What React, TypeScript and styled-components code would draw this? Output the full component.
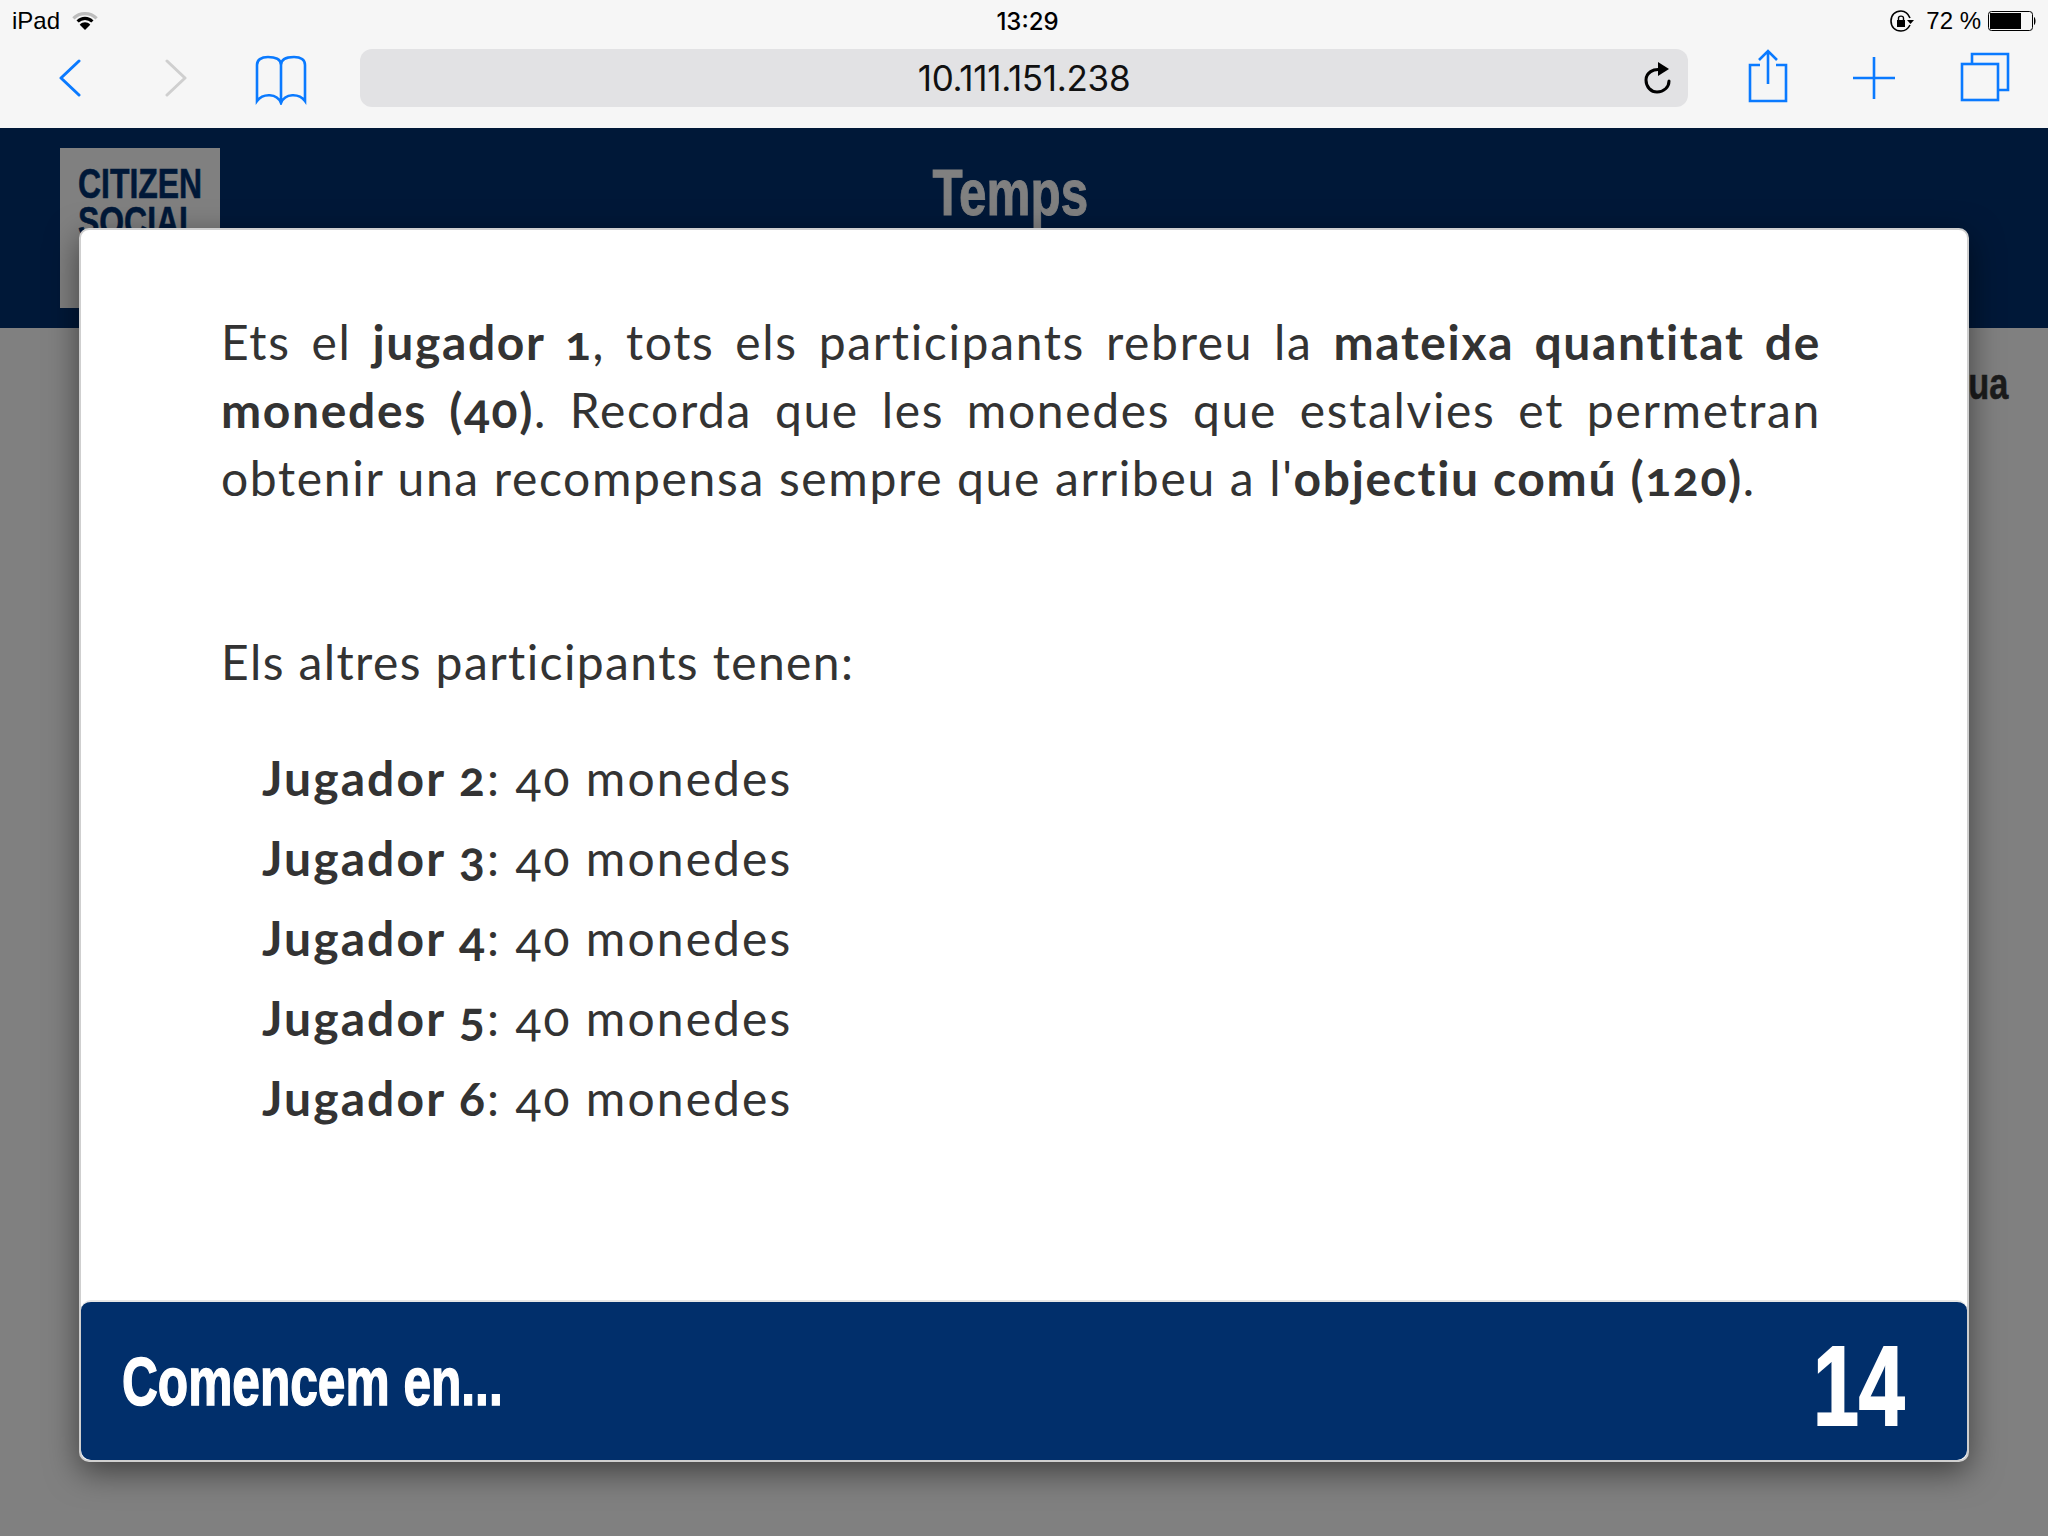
import React from 'react';
import styled, { createGlobalStyle } from 'styled-components';

const GlobalStyle = createGlobalStyle`
  html, body {
    margin: 0;
    padding: 0;
    background: #808080;
  }
`;

const Screen = styled.div`
  position: relative;
  width: 2048px;
  height: 1536px;
  overflow: hidden;
  display: flex;
  flex-direction: column;
  background: #808080;
  font-family: "Liberation Sans", Arial, sans-serif;
`;

const Chrome = styled.div`
  height: 128px;
  background: #f6f6f6;
  display: flex;
  flex-direction: column;
`;

const StatusBar = styled.div`
  height: 42px;
  display: grid;
  grid-template-columns: 1fr auto 1fr;
  align-items: center;
  padding: 0 11px 0 12px;
  font-size: 24px;
  color: #000;
`;

const StatusLeft = styled.div`
  display: flex;
  align-items: center;
  gap: 12px;
`;

const StatusTime = styled.div`
  font-family: Inter, "Liberation Sans", sans-serif;
  font-weight: 500;
  font-size: 24px;
  margin-left: 6px;
`;

const StatusRight = styled.div`
  display: flex;
  align-items: center;
  justify-content: flex-end;
  gap: 12px;
`;

const Percent = styled.span`
  margin-right: -5px;
`;

const Toolbar = styled.div`
  flex: 1;
  display: flex;
  align-items: flex-start;
  padding-top: 7px;
`;

const NavGroup = styled.div`
  width: 360px;
  height: 58px;
  display: flex;
  align-items: center;
`;

const NavButton = styled.div<{ $w: number; $ml: number; $mt?: number }>`
  width: ${p => p.$w}px;
  margin-left: ${p => p.$ml}px;
  margin-top: ${p => p.$mt ?? 0}px;
  display: flex;
`;

const UrlBar = styled.div`
  position: relative;
  width: 1328px;
  height: 58px;
  border-radius: 12px;
  background: #e2e2e4;
  display: flex;
  align-items: center;
  justify-content: center;
  font-family: Inter, "Liberation Sans", sans-serif;
  font-size: 35px;
  letter-spacing: -0.3px;
  color: #111;
`;

const ReloadSlot = styled.div`
  position: absolute;
  right: 15px;
  top: 13px;
  display: flex;
`;

const ActionGroup = styled.div`
  flex: 1;
  display: flex;
  height: 58px;
  padding-left: 60px;
  gap: 65px;
`;

const ActionSlot = styled.div<{ $top: number }>`
  display: flex;
  margin-top: ${p => p.$top}px;
  height: fit-content;
`;

const Page = styled.div`
  flex: 1;
  display: flex;
  flex-direction: column;
`;

const Header = styled.header`
  height: 200px;
  background: #001838;
  display: flex;
  justify-content: center;
  position: relative;
`;

const Logo = styled.div`
  position: absolute;
  left: 60px;
  top: 20px;
  width: 160px;
  height: 160px;
  background: #808080;
  box-sizing: border-box;
  padding: 17px 0 0 18px;
  display: flex;
  flex-direction: column;
  font-weight: 700;
  font-size: 42px;
  color: #001838;
  overflow: hidden;
`;

const LogoLine = styled.div`
  height: 38px;
  line-height: 38px;
`;

const Squeezed = styled.span<{ $x: number; $origin?: string; $stroke?: number }>`
  display: inline-block;
  white-space: nowrap;
  transform: scaleX(${p => p.$x});
  transform-origin: ${p => p.$origin ?? 'left'} center;
  -webkit-text-stroke: ${p => p.$stroke ?? 0}px currentColor;
`;

const HeaderTitle = styled.h1`
  margin: 30px 28px 0 0;
  font-weight: 700;
  font-size: 65px;
  line-height: 70px;
  color: #808080;
`;

const PageHint = styled.div`
  align-self: flex-end;
  margin: 31px 40px 0 0;
  font-weight: 700;
  font-size: 44px;
  color: #1c1c1c;
`;

const Overlay = styled.div`
  position: absolute;
  inset: 0;
  padding: 228px 79px 74px 79px;
  display: flex;
`;

const Modal = styled.div`
  flex: 1;
  display: flex;
  flex-direction: column;
  background: #fff;
  border: 2px solid #cfcfcf;
  border-radius: 10px;
  box-shadow: 0 10px 32px rgba(0, 0, 0, 0.5);
  overflow: hidden;
`;

const ModalBody = styled.div`
  flex: 1;
  padding: 78px 146px 0 140px;
  font-family: Lato, "Open Sans", sans-serif;
  font-size: 48px;
  letter-spacing: 1.65px;
  line-height: 68px;
  color: #333;
  font-variant-numeric: oldstyle-nums;
  font-variant-ligatures: none;
`;

const Line = styled.div<{ $justify?: boolean }>`
  text-align-last: ${p => (p.$justify ? 'justify' : 'left')};
`;

const Intro = styled.div`
  margin-top: 116px;
  letter-spacing: 1.4px;
`;

const PlayerList = styled.ul`
  list-style: none;
  margin: 42px 0 0;
  padding: 0 0 0 41px;
  letter-spacing: 2.1px;
`;

const PlayerRow = styled.li`
  height: 80px;
  line-height: 80px;
`;

const Footer = styled.div`
  height: 160px;
  flex-shrink: 0;
  box-sizing: border-box;
  background: #012f6b;
  border-top: 2px solid #e6e6e6;
  border-radius: 10px;
  display: flex;
  align-items: center;
  justify-content: space-between;
  padding: 0 62px 0 41px;
  color: #fff;
  font-weight: 700;
`;

const FooterLabel = styled.div`
  font-size: 68px;
`;

const Countdown = styled.div`
  font-size: 113px;
  margin-top: 10px;
`;

const BLUE = '#0a7aff';

const BackIcon = ({ color = BLUE, flip = false }: { color?: string; flip?: boolean }) => (
  <svg width="22" height="38" viewBox="0 0 22 38" fill="none" style={flip ? { transform: 'scaleX(-1)' } : undefined}>
    <path d="M20 2 L2 19 L20 36" stroke={color} strokeWidth="3" strokeLinecap="round" strokeLinejoin="round" />
  </svg>
);

const BookIcon = () => (
  <svg width="52" height="50" viewBox="0 0 52 50" fill="none" stroke={BLUE} strokeWidth="2.6">
    <path d="M26 10 C26 4 20 2 13 2 C6 2 2 5 2 10 V46 C8 38 22 38 26 48 C30 38 44 38 50 46 V10 C50 5 46 2 39 2 C32 2 26 4 26 10 V48" />
  </svg>
);

const ReloadIcon = () => (
  <svg width="30" height="32" viewBox="0 0 30 32" fill="none">
    <path d="M19 8 C10 6 3 11 3 18 C3 25 8 30 14 30 C21 30 26 25 26 19" stroke="#000" strokeWidth="3" strokeLinecap="round" />
    <path d="M15 0 L26 7 L15 14 Z" fill="#000" />
  </svg>
);

const ShareIcon = () => (
  <svg width="40" height="54" viewBox="0 0 40 54" fill="none" stroke={BLUE} strokeWidth="2.6">
    <path d="M12 16 H2 V52 H38 V16 H28" />
    <path d="M20 35 V2 M11 11 L20 2 L29 11" />
  </svg>
);

const PlusIcon = () => (
  <svg width="42" height="42" viewBox="0 0 42 42" fill="none" stroke={BLUE} strokeWidth="2.6">
    <path d="M21 0 V42 M0 21 H42" />
  </svg>
);

const TabsIcon = () => (
  <svg width="50" height="50" viewBox="0 0 50 50" fill="none" stroke={BLUE} strokeWidth="2.6">
    <path d="M12 11 V2 H48 V38 H39" />
    <rect x="2" y="12" width="36" height="36" />
  </svg>
);

const WifiIcon = () => (
  <svg width="26" height="19" viewBox="0 0 24 18">
    <path d="M1 6 C7 0 17 0 23 6" stroke="#bdbdbd" strokeWidth="3" fill="none" />
    <path d="M5 9 C9 5 15 5 19 9" stroke="#000" strokeWidth="3" fill="none" />
    <path d="M7 12 C10 9 14 9 17 12 L12 17 Z" fill="#000" />
  </svg>
);

const RotationLockIcon = () => (
  <svg width="24" height="22" viewBox="0 0 24 22" fill="none">
    <path d="M20 8 C18 3 14 1 11 1 C5 1 1 5 1 11 C1 17 5 21 11 21 C15 21 18 19 20 15" stroke="#000" strokeWidth="1.6" />
    <rect x="7" y="10" width="8" height="7" fill="#000" />
    <path d="M8.5 10 V8 C8.5 5.5 13.500 5.500 13.500 8 V10" stroke="#000" strokeWidth="1.4" />
    <path d="M17 10 H24 L20.500 14 Z" fill="#000" />
  </svg>
);

const BatteryIcon = () => (
  <svg width="49" height="20" viewBox="0 0 49 20" fill="none">
    <rect x="0.5" y="0.5" width="44" height="19" rx="3" stroke="#000" />
    <rect x="2" y="2" width="31" height="16" fill="#000" />
    <path d="M46 6 C48 7 48 13 46 14 Z" fill="#000" />
  </svg>
);

const players = [2, 3, 4, 5, 6];

export default function App() {
  return (
    <Screen>
      <GlobalStyle />
      <Chrome>
        <StatusBar>
          <StatusLeft>
            iPad
            <WifiIcon />
          </StatusLeft>
          <StatusTime>13:29</StatusTime>
          <StatusRight>
            <RotationLockIcon />
            <Percent>72 %</Percent>
            <BatteryIcon />
          </StatusRight>
        </StatusBar>
        <Toolbar>
          <NavGroup>
            <NavButton $w={22} $ml={59}>
              <BackIcon />
            </NavButton>
            <NavButton $w={22} $ml={84}>
              <BackIcon color="#cfcfcf" flip />
            </NavButton>
            <NavButton $w={52} $ml={68} $mt={3}>
              <BookIcon />
            </NavButton>
          </NavGroup>
          <UrlBar>
            10.111.151.238
            <ReloadSlot>
              <ReloadIcon />
            </ReloadSlot>
          </UrlBar>
          <ActionGroup>
            <ActionSlot $top={0}>
              <ShareIcon />
            </ActionSlot>
            <ActionSlot $top={8}>
              <PlusIcon />
            </ActionSlot>
            <ActionSlot $top={3}>
              <TabsIcon />
            </ActionSlot>
          </ActionGroup>
        </Toolbar>
      </Chrome>
      <Page>
        <Header>
          <Logo>
            <LogoLine>
              <Squeezed $x={0.76} $stroke={0.6}>CITIZEN</Squeezed>
            </LogoLine>
            <LogoLine>
              <Squeezed $x={0.76} $stroke={0.6}>SOCIAL</Squeezed>
            </LogoLine>
          </Logo>
          <HeaderTitle>
            <Squeezed $x={0.76} $origin="center" $stroke={1}>Temps</Squeezed>
          </HeaderTitle>
        </Header>
        <PageHint>
          <Squeezed $x={0.78} $origin="right" $stroke={0.6}>ua</Squeezed>
        </PageHint>
      </Page>
      <Overlay>
        <Modal>
          <ModalBody>
            <Line $justify>
              Ets el <b>jugador 1</b>, tots els participants rebreu la <b>mateixa quantitat de</b>
            </Line>
            <Line $justify>
              <b>monedes (40)</b>. Recorda que les monedes que estalvies et permetran
            </Line>
            <Line>
              obtenir una recompensa sempre que arribeu a l'<b>objectiu comú (120)</b>.
            </Line>
            <Intro>Els altres participants tenen:</Intro>
            <PlayerList>
              {players.map(n => (
                <PlayerRow key={n}>
                  <b>Jugador {n}</b>: 40 monedes
                </PlayerRow>
              ))}
            </PlayerList>
          </ModalBody>
          <Footer>
            <FooterLabel>
              <Squeezed $x={0.73} $stroke={1.5}>Comencem en...</Squeezed>
            </FooterLabel>
            <Countdown>
              <Squeezed $x={0.73} $origin="right" $stroke={2}>14</Squeezed>
            </Countdown>
          </Footer>
        </Modal>
      </Overlay>
    </Screen>
  );
}
